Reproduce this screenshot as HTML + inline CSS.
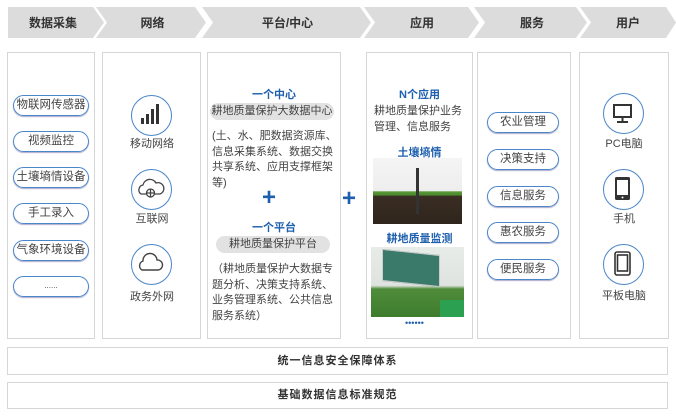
<!DOCTYPE html><html><head><meta charset="utf-8"><style>
*{margin:0;padding:0;box-sizing:border-box}
body{width:676px;height:420px;background:#fff;position:relative;overflow:hidden;font-family:"Liberation Sans","Noto Sans CJK SC",sans-serif;color:#444}
.a{position:absolute}
.box{position:absolute;border:1px solid #d6d6d6;top:52px;height:287px;background:#fff}
.hd{position:absolute;top:13px;font-size:12px;font-weight:bold;color:#333;text-align:center;line-height:20px}
.pill{position:absolute;border:1.5px solid #4a86c8;border-radius:14px;text-align:center;font-size:11.5px;color:#444;height:21px;line-height:18px;box-shadow:0 1px 1px #aac}
.circ{position:absolute;width:41px;height:41px;border:1.5px solid #4a86c8;border-radius:50%}
.lbl{position:absolute;font-size:11px;text-align:center;color:#444}
.blue{color:#1e5fae;font-weight:bold;font-size:11px;text-align:center;position:absolute}
.tx{position:absolute;font-size:11px;line-height:15.5px;color:#444}
.bar{position:absolute;left:7px;width:661px;border:1px solid #d6d6d6;text-align:center;font-size:11px;font-weight:bold;color:#333;letter-spacing:1px}
</style></head><body>
<svg class="a" style="left:0;top:0" width="676" height="45">
<g fill="#dcdcdc">
<polygon points="8,7 93,7 104,22.5 93,38 8,38"/>
<polygon points="96,7 195,7 206,22.5 195,38 96,38 107,22.5"/>
<polygon points="202,7 360,7 371,22.5 360,38 202,38 213,22.5"/>
<polygon points="364,7 468,7 479,22.5 468,38 364,38 375,22.5"/>
<polygon points="474,7 576,7 587,22.5 576,38 474,38 485,22.5"/>
<polygon points="580,7 666,7 676,22.5 666,38 580,38 591,22.5"/>
</g></svg>
<div class="hd" style="left:8px;width:90px">数据采集</div>
<div class="hd" style="left:105px;width:95px">网络</div>
<div class="hd" style="left:210px;width:155px">平台/中心</div>
<div class="hd" style="left:372px;width:100px">应用</div>
<div class="hd" style="left:482px;width:100px">服务</div>
<div class="hd" style="left:588px;width:80px">用户</div>

<div class="box" style="left:7px;width:88px"></div>
<div class="box" style="left:102px;width:99px"></div>
<div class="box" style="left:207px;width:134px"></div>
<div class="box" style="left:366px;width:107px"></div>
<div class="box" style="left:477px;width:94px"></div>
<div class="box" style="left:579px;width:90px"></div>

<div class="pill" style="left:13px;top:95px;width:76px">物联网传感器</div>
<div class="pill" style="left:13px;top:131px;width:76px">视频监控</div>
<div class="pill" style="left:13px;top:167px;width:76px">土壤墒情设备</div>
<div class="pill" style="left:13px;top:203px;width:76px">手工录入</div>
<div class="pill" style="left:13px;top:240px;width:76px">气象环境设备</div>
<div class="pill" style="left:13px;top:276px;width:76px;font-size:8px">......</div>

<div class="circ" style="left:131px;top:95px"><svg width="38" height="38"><g fill="#333"><rect x="9" y="22" width="3" height="6"/><rect x="14" y="18" width="3" height="10"/><rect x="19" y="13" width="3" height="15"/><rect x="24" y="8" width="3" height="20"/></g></svg></div>
<div class="lbl" style="left:112px;top:135px;width:80px">移动网络</div>
<div class="circ" style="left:131px;top:169px"><svg width="38" height="38" fill="none" stroke="#444" stroke-width="1.3"><path d="M9 24 a5 5 0 0 1 2-9 a7 7 0 0 1 13-2 a5 5 0 0 1 4 11z"/><circle cx="18.5" cy="23" r="4" fill="#fff"/><path d="M14.5 23h8M18.5 19v8"/></svg></div>
<div class="lbl" style="left:112px;top:210px;width:80px">互联网</div>
<div class="circ" style="left:131px;top:244px"><svg width="38" height="38" fill="none" stroke="#444" stroke-width="1.4"><path d="M10 25 a5 5 0 0 1 1-9 a7 7 0 0 1 14-1 a5 5 0 0 1 1 10z"/></svg></div>
<div class="lbl" style="left:112px;top:288px;width:80px">政务外网</div>

<div class="blue" style="left:208px;top:86px;width:132px">一个中心</div>
<div class="a" style="left:210px;top:103px;width:124px;height:17px;background:#e2e2e2;border-radius:9px;font-size:11px;text-align:center;line-height:17px;color:#444">耕地质量保护大数据中心</div>
<div class="tx" style="left:212px;top:129px;width:126px">(土、水、肥数据资源库、信息采集系统、数据交换共享系统、应用支撑框架等)</div>
<div class="a" style="left:262px;top:186px;font-size:24px;font-weight:bold;color:#1e5fae;line-height:24px">+</div>
<div class="blue" style="left:208px;top:219px;width:132px">一个平台</div>
<div class="a" style="left:216px;top:236px;width:114px;height:17px;background:#e2e2e2;border-radius:9px;font-size:11px;text-align:center;line-height:17px;color:#444">耕地质量保护平台</div>
<div class="tx" style="left:212px;top:262px;width:126px">（耕地质量保护大数据专题分析、决策支持系统、业务管理系统、公共信息服务系统）</div>

<div class="a" style="left:342px;top:187px;font-size:24px;font-weight:bold;color:#1e5fae;line-height:24px">+</div>

<div class="blue" style="left:366px;top:86px;width:107px">N个应用</div>
<div class="tx" style="left:374px;top:104px;width:96px">耕地质量保护业务管理、信息服务</div>
<div class="blue" style="left:366px;top:144px;width:107px">土壤墒情</div>
<div class="a" style="left:373px;top:158px;width:89px;height:66px;background:linear-gradient(#f4f4f4 0,#eee 50%,#5a9a3a 51%,#4a8a2a 56%,#3a2e24 58%,#2f251c 100%)"></div>
<div class="a" style="left:416px;top:168px;width:3px;height:46px;background:#333"></div>
<div class="blue" style="left:366px;top:230px;width:107px">耕地质量监测</div>
<div class="a" style="left:371px;top:247px;width:93px;height:70px;background:linear-gradient(#e8ece8 0,#dfe3df 55%,#4f8c3a 60%,#3e7d2e 100%)"></div>
<div class="a" style="left:382px;top:252px;width:58px;height:32px;background:#3a7a6a;transform:skewY(6deg);border:1px solid #ccc"></div>
<div class="a" style="left:440px;top:300px;width:24px;height:17px;background:#2aa050"></div>
<div class="a" style="left:405px;top:318px;font-size:9px;color:#1e5fae">••••••</div>

<div class="pill" style="left:487px;top:112px;width:72px">农业管理</div>
<div class="pill" style="left:487px;top:149px;width:72px">决策支持</div>
<div class="pill" style="left:487px;top:186px;width:72px">信息服务</div>
<div class="pill" style="left:487px;top:222px;width:72px">惠农服务</div>
<div class="pill" style="left:487px;top:259px;width:72px">便民服务</div>

<div class="circ" style="left:603px;top:93px"><svg width="38" height="38" fill="none" stroke="#333" stroke-width="2"><rect x="10" y="11" width="17" height="12"/><path d="M18.5 23v4M13 28h11"/></svg></div>
<div class="lbl" style="left:582px;top:135px;width:84px">PC电脑</div>
<div class="circ" style="left:603px;top:169px"><svg width="38" height="38"><rect x="11" y="7" width="15" height="23" rx="1.5" fill="#333"/><rect x="13" y="10" width="11" height="15" fill="#fff"/><circle cx="18.5" cy="27.5" r="1" fill="#fff"/></svg></div>
<div class="lbl" style="left:582px;top:210px;width:84px">手机</div>
<div class="circ" style="left:603px;top:244px"><svg width="38" height="38" fill="none" stroke="#333" stroke-width="1.6"><rect x="11" y="7" width="15" height="23" rx="2"/><rect x="13.5" y="10" width="10" height="16"/></svg></div>
<div class="lbl" style="left:582px;top:287px;width:84px">平板电脑</div>

<div class="bar" style="top:347px;height:28px;line-height:26px">统一信息安全保障体系</div>
<div class="bar" style="top:382px;height:27px;line-height:25px">基础数据信息标准规范</div>
</body></html>
